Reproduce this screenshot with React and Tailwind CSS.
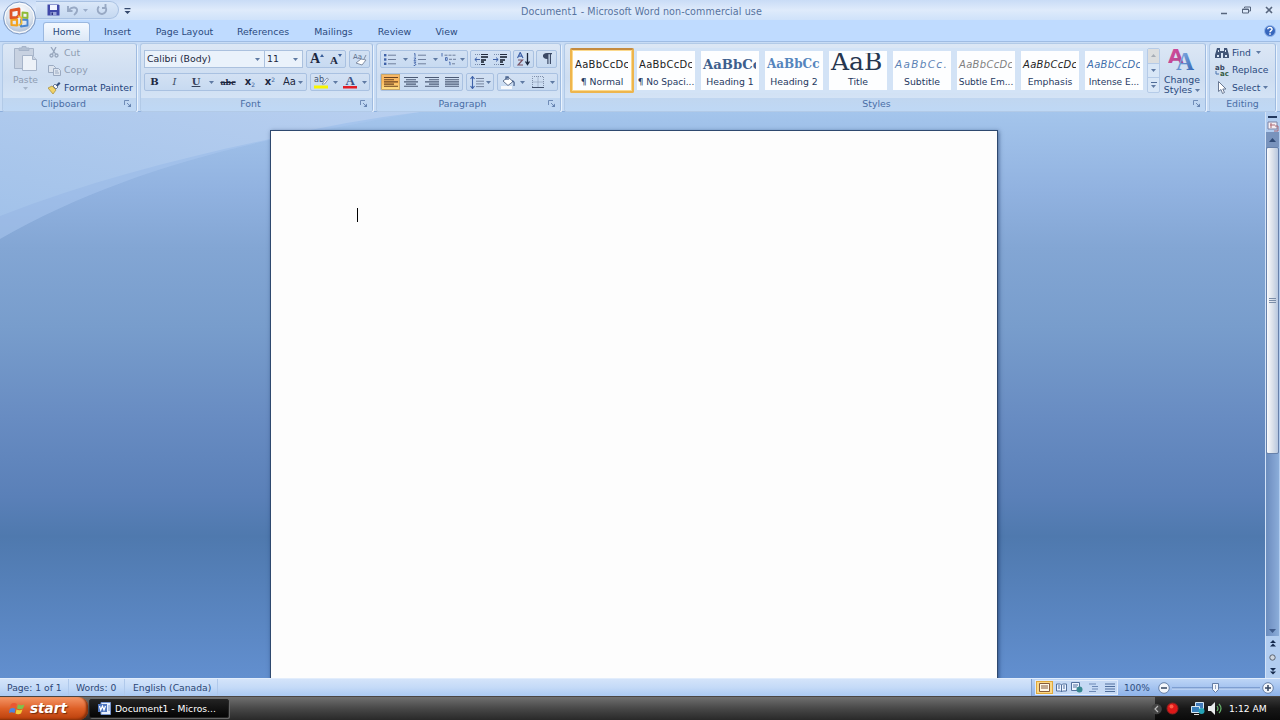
import React from "react";

const Caret = ({ c = "#5f7aa3" }) => (
  <svg width="5" height="3" viewBox="0 0 5 3" className="shrink-0"><path d="M0 0h5L2.5 3z" fill={c} /></svg>
);

const Tool = ({ w, children, active }) => (
  <div className={`${w} h-full flex items-center justify-center ${active ? "bg-linear-to-b from-[#f8b86a] via-[#fdb95a] to-[#ffe58c] ring-1 ring-inset ring-[#c9a76a]" : ""}`}>{children}</div>
);

const Strip = ({ w, children }) => (
  <div className={`${w} h-[18px] shrink-0 flex items-center rounded-[2px] border border-[#a9c1e1] bg-linear-to-b from-[#d3e1f3] to-[#c7daf1] overflow-hidden`}>{children}</div>
);

const Launcher = () => (
  <svg width="8" height="8" viewBox="0 0 8 8" fill="none" stroke="#6683b0"><path d="M.5 5V.5H5M3 3l3 3" strokeWidth=".9" /><path d="M7 3.5V7H3.5z" fill="#6683b0" stroke="none" /></svg>
);

const Group = ({ w, label, launcher = true, children }) => (
  <section className={`${w} h-[69px] shrink-0 flex flex-col rounded-[3px] border border-[#b2cae7] border-r-[#9fbbe0] bg-linear-to-b from-[#dce7f5] via-[#cdddf1] to-[#d8e7f8] shadow-[1px_1px_0_#eaf3fd] overflow-hidden`}>
    <div className="h-[54px] shrink-0">{children}</div>
    <div className="flex-1 flex items-center pb-px bg-linear-to-b from-[#c0d6f0] to-[#bfd8f5] text-[#4a6ea6]">
      <span className="flex-1 text-center leading-[12px]">{label}</span>
      {launcher && <span className="w-[12px]"><Launcher /></span>}
    </div>
  </section>
);

const Lines = ({ a, c = "#4b5a75" }) => (
  <svg width="14" height="12" viewBox="0 0 14 12" stroke={c} strokeWidth="1.1">
    {[14, a === "full" ? 14 : 10, 14, a === "full" ? 14 : 10, 14].map((w, i) => {
      const s = a === "center" ? (14 - w) / 2 : a === "right" ? 14 - w : 0;
      return <path key={i} d={`M${s} ${1.5 + i * 2.2}h${w}`} />;
    })}
  </svg>
);

const ListIcon = ({ kind }) => (
  <svg width="16" height="13" viewBox="0 0 16 13" fill="none" stroke="#6f7f9c">
    {kind === "bullet" && <><g fill="#3f62a8" stroke="none"><rect x="1" y="1" width="2.4" height="2.4" /><rect x="1" y="5.3" width="2.4" height="2.4" /><rect x="1" y="9.6" width="2.4" height="2.4" /></g><path d="M5 2.2h8M5 6.5h8M5 10.8h8" /></>}
    {kind === "number" && <><path stroke="#3f62a8" strokeWidth=".9" d="M1 1l1-.5V3.8M.8 5h2L1 7.8h2.2M.8 9.2h2L1.7 10.700l1.3.8-1 1H.7" /><path d="M5 2.2h8M5 6.5h8M5 10.8h8" /></>}
    {kind === "multi" && <><path stroke="#3f62a8" strokeWidth=".9" d="M1 0v3.5M4.5 4.6h1.7v2.8H4.5zM8 9.2h1v3" /><path d="M3.5 2.2h11M8 6.3h7.500M11 10.8h4" strokeDasharray="3 1" /></>}
  </svg>
);

const Indent = ({ flip }) => (
  <svg width="15" height="13" viewBox="0 0 15 13" fill="none">
    <path d="M1 1.5h5M1 11.5h5" stroke="#7a8cab" strokeDasharray="1 1" />
    <path d="M7 1.5h7M7 11.5h4" stroke="#222b3d" /><path d="M7 4h7M7 7h5M7 9h3" stroke="#111827" strokeWidth="1.7" />
    <path d={flip ? "M0 6.5h5M3 4.5l2.2 2L3 8.5" : "M6 6.5H1M3 4.5L.8 6.5 3 8.5"} stroke="#3f62a8" />
  </svg>
);

const styles = [
  ["¶ Normal", "AaBbCcDc", "font-['DejaVu_Sans'] text-[10px] tracking-[.3px] text-[#222]"],
  ["¶ No Spaci...", "AaBbCcDc", "font-['DejaVu_Sans'] text-[10px] tracking-[.3px] text-[#222]"],
  ["Heading 1", "AaBbCc", "font-['DejaVu_Serif'] font-bold text-[13.2px] text-[#3d5f8d]"],
  ["Heading 2", "AaBbCc", "font-['DejaVu_Serif'] font-bold text-[12px] text-[#5585bd]"],
  ["Title", "AaB", "font-['DejaVu_Serif'] text-[25px] text-[#26364f]"],
  ["Subtitle", "AaBbCc.", "font-['DejaVu_Sans'] italic text-[10.5px] tracking-[1.3px] text-[#5c82b5]"],
  ["Subtle Em...", "AaBbCcDc", "font-['DejaVu_Sans'] italic text-[10px] tracking-[.3px] text-[#808080]"],
  ["Emphasis", "AaBbCcDc", "font-['DejaVu_Sans'] italic text-[10px] tracking-[.3px] text-[#222]"],
  ["Intense E...", "AaBbCcDc", "font-['DejaVu_Sans'] italic text-[10px] tracking-[.3px] text-[#3f6fac]"],
];

function OfficeButton() {
  return (
    <svg className="absolute left-[2px] top-[1px] z-10" width="35" height="34" viewBox="0 0 35 34">
      <defs><radialGradient id="orb" cx=".5" cy=".3" r=".75"><stop offset="0" stopColor="#fff" /><stop offset=".55" stopColor="#dce4ee" /><stop offset=".8" stopColor="#b6c6dc" /><stop offset="1" stopColor="#fff" /></radialGradient></defs>
      <circle cx="17.5" cy="17" r="16" fill="url(#orb)" stroke="#7f9bc5" />
      <circle cx="17.5" cy="17" r="14.6" fill="none" stroke="#fff" strokeWidth="1" />
      <g fill="none" strokeLinejoin="round">
        <path d="M9 9.500l8-1.500v6.500l-2.500 2-5.500.5z" stroke="#df5424" strokeWidth="2.8" />
        <path d="M20.500 11.500l5 .5v5l-5-.5z" stroke="#8fbb36" strokeWidth="1.900" />
        <path d="M9.500 19l5.500-.5v6l-5.500-.5z" stroke="#f3a21c" strokeWidth="2.200" />
        <path d="M19 18.500l6.500.5v5.500l-6.500 1z" stroke="#4a86d0" strokeWidth="1.900" />
        <path d="M16 15l3.500 1.500v6l-3 2" stroke="#f0bb38" strokeWidth="1.800" />
      </g>
    </svg>
  );
}

function TitleBar() {
  return (
    <div className="h-5 flex items-center bg-linear-to-b from-[#c9dcf6] via-[#dfebfb] to-[#cfe2fa]">
      <div className="ml-9 w-[83px] h-[18px] pl-[11px] flex items-center rounded-r-full border border-[#a9c1e2] border-l-0 bg-linear-to-b from-[#dbe8f9] to-[#c5d8f0]">
        <svg width="13" height="12" viewBox="0 0 13 12"><path d="M.5.5h11l1 1v10H.5z" fill="#4048a8" /><path d="M3 1h7v5H3z" fill="#f1f4ff" /><path d="M3.500 8h6v3.500h-6z" fill="#9da6da" /><path d="M4.500 8.500h1.500v2.500H4.500z" fill="#293180" /></svg>
        <svg className="ml-[7px]" width="12" height="11" viewBox="0 0 12 11" fill="none" stroke="#98a9c4" strokeWidth="1.900"><path d="M2 5c3-4 9-3 8 1-.4 2-2 3-3 4M1 1v5h4.500" /></svg>
        <span className="ml-[4px]"><Caret c="#9badca" /></span>
        <svg className="ml-[8px]" width="12" height="12" viewBox="0 0 12 12" fill="none" stroke="#98a9c4" strokeWidth="1.900"><path d="M3 2.500a4.300 4.300 0 1 0 5.500-.3M9.500 0v4H6" /></svg>
      </div>
      <svg className="ml-[5px] mt-px" width="7" height="6" viewBox="0 0 7 6"><path d="M.5 0h6v1.200h-6zM.5 3h6l-3 3z" fill="#35496e" /></svg>
      <div className="ml-[390px] w-[245px] mt-[3px] whitespace-nowrap text-[9.600px] tracking-[.08px] text-[#56739f]">Document1 - Microsoft Word non-commercial use</div>
      <div className="flex-1" />
      <div className="flex items-center gap-[14px] pr-[7px] text-[#56657d]">
        <svg width="8" height="9" viewBox="0 0 8 9"><path d="M1 7.500h6" stroke="currentColor" strokeWidth="1.500" /></svg>
        <svg width="9" height="8" viewBox="0 0 9 8" fill="none" stroke="currentColor"><path d="M2.500 2V1h6v4H7M.5 3h6v4h-6zM.5 3.500h6" /></svg>
        <svg width="8" height="8" viewBox="0 0 8 8" stroke="currentColor" strokeWidth="1.600"><path d="M1 1l6 6M7 1L1 7" /></svg>
      </div>
    </div>
  );
}

function Tabs() {
  return (
    <nav className="h-[21px] flex items-end bg-[#bfdbff] text-[#2b4a7e] text-[9.400px]">
      <div className="ml-[43px] w-[47px] h-[19px] flex items-center justify-center rounded-t-[3px] border border-b-0 border-[#9ab8e0] bg-linear-to-b from-[#f4f9ff] to-[#dce8f6]">Home</div>
      {[["Insert", "w-[55px]"], ["Page Layout", "w-[79px]"], ["References", "w-[78px]"], ["Mailings", "w-[63px]"], ["Review", "w-[59px]"], ["View", "w-[45px]"]].map(([t, w]) => (
        <div key={t} className={`${w} h-[19px] pt-px flex items-center justify-center whitespace-nowrap`}>{t}</div>
      ))}
      <div className="flex-1" />
      <svg className="mr-[4px] mb-[4px]" width="12" height="12" viewBox="0 0 12 12"><circle cx="6" cy="6" r="5.500" fill="#3666bd" stroke="#94b7ec" /><path d="M3.800 4.200C4 1.500 8.300 2 8 4.500 7.800 5.700 6 5.500 6 7.300M6 8.200v1.500" fill="none" stroke="#fff" strokeWidth="1.500" /></svg>
    </nav>
  );
}

function Clipboard() {
  return (
    <Group w="w-[135px]" label="Clipboard">
      <div className="flex h-full text-[#8f9db2]">
        <div className="w-[45px] pt-[2px] flex flex-col items-center">
          <svg width="25" height="25" viewBox="0 0 25 25" fill="#c8d2e1" stroke="#a6b4c9"><path d="M1.500 2.500h19v20h-19z" /><path d="M6 4.500V2h3V.5h4V2h3v2.500z" fill="#b3c0d2" /><path d="M9.500 9.500h10l4 4v11h-14z" fill="#edf2f8" /><path d="M19.500 9.500v4h4" /></svg>
          <span className="mt-[3px] leading-[12px] text-[9.200px]">Paste</span><span className="mt-px"><Caret c="#a6b5ca" /></span>
        </div>
        <div className="flex-1 flex flex-col whitespace-nowrap text-[9.400px]">
          <div className="h-[17px] flex items-center"><span className="w-[16px] pl-px"><svg width="10" height="11" viewBox="0 0 10 11" fill="none" stroke="#97a6bc" strokeWidth="1.300"><path d="M2 0l4.500 7M7 0L3.500 7" /><circle cx="2.500" cy="8.500" r="1.500" /><circle cx="7.500" cy="8.500" r="1.500" /></svg></span>Cut</div>
          <div className="h-[18px] flex items-center"><span className="w-[16px]"><svg width="13" height="11" viewBox="0 0 13 11" fill="#dce4ef" stroke="#9baac1"><path d="M.5.5h5l2 2v5h-7z" /><path d="M5.500 3.500h5l2 2v5h-7zM7 6h3M7 8h4" /></svg></span>Copy</div>
          <div className="h-[17px] flex items-center text-[#24447e]"><span className="w-[16px]"><svg width="13" height="12" viewBox="0 0 13 12"><path d="M0 6l4-2 4 4-3 4z" fill="#f0d269" stroke="#a58a37" strokeWidth=".7" /><path d="M5 4l2-2 3 3-2 2z" fill="#f7f8fb" stroke="#71819d" /><path d="M8 3l3-3 1.500 1.500-3 3z" fill="#35507f" /></svg></span>Format Painter</div>
        </div>
      </div>
    </Group>
  );
}

function FontGroup() {
  return (
    <Group w="w-[233px]" label="Font">
      <div className="pt-[6px] pl-[3px] flex flex-col gap-[5px] text-[#1c2740]">
        <div className="flex">
          <div className="w-[121px] h-[18px] border border-[#abc1de] bg-[#eaf2fb] flex items-center justify-between pl-[2px] pr-[4px] text-[9.400px]">Calibri (Body)<Caret /></div>
          <div className="w-[38px] h-[18px] border border-l-0 border-[#abc1de] bg-[#eaf2fb] flex items-center justify-between pl-[2px] pr-[4px] text-[9.400px]">11<Caret /></div>
          <div className="w-[3px]" />
          <Strip w="w-[40px]">
            <Tool w="w-[20px]"><span className="font-['Liberation_Serif'] font-bold text-[14px] leading-[18px]">A</span><span className="mb-[8px]"><svg className="block" width="4" height="3"><path d="M0 3l2-3 2 3z" fill="#3b5f9a" /></svg></span></Tool>
            <Tool w="w-[18px]"><span className="font-['Liberation_Serif'] font-bold text-[11px] leading-none mt-[2px]">A</span><span className="mb-[8px]"><svg className="block" width="4" height="3"><path d="M0 0h4L2 3z" fill="#3b5f9a" /></svg></span></Tool>
          </Strip>
          <div className="w-[3px]" />
          <Strip w="w-[21px]"><Tool w="w-[19px]"><svg width="16" height="14" viewBox="0 0 16 14"><text x="1" y="7" fontSize="7" fontFamily="DejaVu Sans" fill="#596b88">Aa</text><path d="M4 11l5-4 5 1-4 5z" fill="#fff" stroke="#8390a6" /><path d="M12 7l2-4" stroke="#8390a6" /></svg></Tool></Strip>
        </div>
        <div className="flex gap-[3px]">
          <Strip w="w-[163px]">
            <Tool w="w-[19px]"><b className="font-['DejaVu_Serif'] text-[10px]">B</b></Tool>
            <Tool w="w-[21px]"><i className="font-['DejaVu_Serif'] text-[10px] text-[#414e67]">I</i></Tool>
            <Tool w="w-[22px]"><u className="font-['DejaVu_Serif'] text-[10px] font-bold text-[#35415a]">U</u></Tool>
            <Tool w="w-[9px]"><Caret /></Tool>
            <Tool w="w-[24px]"><s className="font-['DejaVu_Serif'] font-bold text-[8.100px] tracking-[-.2px]">abc</s></Tool>
            <Tool w="w-[20px]"><b className="text-[10px]">x</b><span className="text-[6px] mt-[5px] text-[#3b5f9a]">2</span></Tool>
            <Tool w="w-[20px]"><b className="text-[10px]">x</b><span className="text-[6px] mb-[5px] text-[#3b5f9a]">2</span></Tool>
            <Tool w="w-[26px]"><span className="font-['DejaVu_Sans'] text-[10px] mr-[2px]">Aa</span><Caret /></Tool>
          </Strip>
          <Strip w="w-[60px]">
            <Tool w="w-[20px]"><svg width="15" height="14" viewBox="0 0 15 14"><text x="0" y="7" fontSize="8" fontFamily="DejaVu Sans" fill="#40506e">ab</text><path d="M8 9l5-6 1.500 1-4 5z" fill="#fff" stroke="#71809b" strokeWidth=".8" /><path d="M0 10.500h14v3H0z" fill="#f8f500" /></svg></Tool>
            <Tool w="w-[9px]"><Caret /></Tool>
            <Tool w="w-[20px]"><svg width="14" height="14" viewBox="0 0 14 14"><text x="2.500" y="10" fontSize="13" fontWeight="bold" fontFamily="Liberation Serif" fill="#3d5486">A</text><path d="M0 11h14v2.500H0z" fill="#e31d25" /></svg></Tool>
            <Tool w="w-[9px]"><Caret /></Tool>
          </Strip>
        </div>
      </div>
    </Group>
  );
}

function Paragraph() {
  return (
    <Group w="w-[185px]" label="Paragraph">
      <div className="pt-[6px] pl-[3px] flex flex-col gap-[5px]">
        <div className="flex gap-[2px]">
          <Strip w="w-[88px]">
            <Tool w="w-[20px]"><ListIcon kind="bullet" /></Tool><Tool w="w-[9px]"><Caret /></Tool>
            <Tool w="w-[21px]"><ListIcon kind="number" /></Tool><Tool w="w-[9px]"><Caret /></Tool>
            <Tool w="w-[18px]"><ListIcon kind="multi" /></Tool><Tool w="w-[8px]"><Caret /></Tool>
          </Strip>
          <Strip w="w-[41px]"><Tool w="w-[20px]"><Indent /></Tool><Tool w="w-[19px]"><Indent flip /></Tool></Strip>
          <Strip w="w-[21px]"><Tool w="w-[19px]"><svg width="14" height="14" viewBox="0 0 14 14" fill="none"><path d="M.5 6L3.200.5 6 6M1.500 4.200h3.500" stroke="#3f62a8" strokeWidth="1.200" /><path d="M1 8h4.500L1 13h5" stroke="#7b5263" strokeWidth="1.200" /><path d="M10.500 1v11M8.500 9.500l2 3 2-3" stroke="#18243a" strokeWidth="1.300" /></svg></Tool></Strip>
          <Strip w="w-[21px]"><Tool w="w-[19px]"><svg width="10" height="12" viewBox="0 0 10 12"><path d="M5 0h5v1.200H9V11H7.800V1.200H6.500V11H5.300V6C-.5 6-.5 0 5 0z" fill="#3c4a66" /></svg></Tool></Strip>
        </div>
        <div className="flex gap-[3px]">
          <Strip w="w-[83px]">
            <Tool w="w-[19px]" active><Lines a="left" c="#6b4320" /></Tool><Tool w="w-[21px]"><Lines a="center" /></Tool><Tool w="w-[21px]"><Lines a="right" /></Tool><Tool w="w-[20px]"><Lines a="full" /></Tool>
          </Strip>
          <Strip w="w-[28px]"><Tool w="w-[26px]"><svg className="mr-[2px]" width="14" height="13" viewBox="0 0 14 13" fill="none"><path d="M2.500 1v11M.5 3l2-2.500 2 2.500M.5 10l2 2.500 2-2.500" stroke="#3f62a8" strokeWidth="1.100" /><path d="M6 2.500h8M6 5.200h8M6 7.900h8M6 10.600h8" stroke="#76849e" /></svg><Caret /></Tool></Strip>
          <Strip w="w-[61px]">
            <Tool w="w-[20px]"><svg width="15" height="13" viewBox="0 0 15 13"><path d="M2 5l5-4 5 4.500-5 4z" fill="#fff" stroke="#65748e" /><path d="M5 4V1h2v3M11 5c3 0 2 3 2 5" fill="none" stroke="#49638f" strokeWidth="1.300" /><path d="M0 10h11v3H0z" fill="#f6f8fb" /></svg></Tool>
            <Tool w="w-[9px]"><Caret /></Tool>
            <Tool w="w-[21px]"><svg width="12" height="12" viewBox="0 0 12 12" fill="none" stroke="#8090aa"><path d="M.5 11V.5h11V11M6 .5V11M.5 6h11" strokeDasharray="1 1" /><path d="M0 11.500h12" stroke="#3f4d68" /></svg></Tool>
            <Tool w="w-[9px]"><Caret /></Tool>
          </Strip>
        </div>
      </div>
    </Group>
  );
}

function StylesGroup() {
  return (
    <Group w="w-[642px]" label={<span className="mr-[5px]">Styles</span>}>
      <div className="flex pl-[5px] pt-[4px]">
        <div className="w-[577px] h-[45px] flex bg-[#d3e3f6]">
          {styles.map(([name, sample, cls], i) => (
            <div key={name} className={`w-[64px] h-[45px] shrink-0 ${i === 0 ? "rounded-[2px] border-2 border-[#eeb54d] border-t-[#c58b3f] bg-white ring-1 ring-inset ring-[#fbd98d] py-px px-px" : "py-[3px] px-[3px]"}`}>
              <div className="h-[39px] bg-[#fdfeff] flex flex-col overflow-hidden">
                <div className={`${name === "Title" ? "mt-[2px] h-[23px] leading-[18px]" : "h-[25px] leading-[27px]"} pl-[2px] mr-[3px] overflow-hidden whitespace-nowrap ${cls}`}>{sample}</div>
                <div className={`text-center whitespace-nowrap leading-[12px] text-[#26395f] ${name.length > 10 ? "text-[9px]" : "text-[9.300px]"}`}>{name}</div>
              </div>
            </div>
          ))}
        </div>
        <div className="w-[13px] h-[45px] flex flex-col border border-[#b5cbe8] rounded-[2px] bg-[#d9e7f7]">
          <div className="flex-1 flex items-center justify-center bg-[#dcdedf]"><svg width="5" height="3"><path d="M0 3l2.500-3L5 3z" fill="#a7adb6" /></svg></div>
          <div className="flex-1 flex items-center justify-center border-y border-[#b5cbe8]"><Caret /></div>
          <div className="flex-1 flex flex-col gap-[2px] items-center justify-center"><span className="w-[6px] h-px bg-[#4f6b96]" /><Caret /></div>
        </div>
        <div className="ml-[2px] w-[40px] -mt-[2px] flex flex-col items-center text-[#2b4a7e] leading-[10px] whitespace-nowrap">
          <svg width="28" height="25" viewBox="0 0 28 25"><defs><linearGradient id="pinkA" x2="1" y2="1"><stop stopColor="#e34b9e" /><stop offset="1" stopColor="#a3458c" /></linearGradient><linearGradient id="blueA" x2="1" y2="1"><stop stopColor="#9cc1ef" /><stop offset="1" stopColor="#2b5eae" /></linearGradient></defs><text x="0" y="17" fontSize="20" fontWeight="bold" fontFamily="DejaVu Sans" fill="url(#pinkA)">A</text><text x="8" y="24" fontSize="25" fontWeight="bold" fontFamily="Liberation Serif" fill="url(#blueA)">A</text></svg>
          <span className="mt-[4px]">Change</span><span className="flex items-center gap-[3px]">Styles <Caret /></span>
        </div>
      </div>
    </Group>
  );
}

function Editing() {
  return (
    <Group w="w-[67px]" label="Editing" launcher={false}>
      <div className="pl-[5px] text-[#2b4a7e] text-[9.200px]">
        <div className="h-[17px] flex items-center"><span className="w-[17px]"><svg width="14" height="12" viewBox="0 0 14 12"><path d="M2 1h3v3h4V1h3l2 7v3H8V6H6v5H0V8z" fill="#415577" /><path d="M2 8h2v2H2zM10 8h2v2h-2zM3 3h1v2H3zM10 3h1v2h-1z" fill="#dce7f6" /></svg></span>Find<span className="ml-[5px]"><Caret /></span></div>
        <div className="h-[18px] flex items-center"><span className="w-[17px]"><svg width="15" height="13" viewBox="0 0 15 13"><text x="0" y="6" fontSize="7" fontWeight="bold" fontFamily="DejaVu Sans" fill="#39465e">ab</text><text x="5" y="12" fontSize="7" fontWeight="bold" fontFamily="DejaVu Sans" fill="#365b43">ac</text><path d="M1 7v3h3" fill="none" stroke="#4873ae" /></svg></span>Replace</div>
        <div className="h-[17px] flex items-center"><span className="w-[17px] pl-[3px]"><svg width="9" height="13" viewBox="0 0 9 13"><path d="M.5.5v10l2.500-2 1.500 4 2-1-1.700-3.500H8z" fill="#fff" stroke="#697892" /></svg></span>Select<span className="ml-[3px]"><Caret /></span></div>
      </div>
    </Group>
  );
}

function ScrollBar() {
  return (
    <div className="w-[15px] h-full flex flex-col items-center bg-[#b2cdf0] border-l border-[#d3e3f8] pr-px">
      <div className="mt-[4px] w-[9px] h-[2px] bg-[#23395f]" />
      <svg className="mt-[2px]" width="12" height="12" viewBox="0 0 12 12"><path d="M1 2h9v7H1z" fill="#f7eff3" stroke="#7c83a5" /><path d="M3 5h5M4 3v5M8 6h3v5H7" stroke="#aa6b76" fill="none" /></svg>
      <div className="w-[13px] h-[504px] flex flex-col bg-linear-to-r from-[#6a8cbd] via-[#7c9ccc] to-[#8badd9]">
        <div className="h-[15px] flex items-center justify-center bg-[#7893bd]"><svg width="7" height="4"><path d="M0 4l3.500-4L7 4z" fill="#304b77" /></svg></div>
        <div className="h-[307px] border border-[#6781aa] rounded-[2px] bg-linear-to-r from-[#fafbfd] via-[#dbe1ea] to-[#b7c7df] flex flex-col justify-center items-center gap-px">
          <span className="w-[7px] h-px bg-[#7b8da8]" /><span className="w-[7px] h-px bg-[#7b8da8]" /><span className="w-[7px] h-px bg-[#7b8da8]" />
        </div>
        <div className="flex-1" />
        <div className="h-[11px] flex items-center justify-center"><svg width="7" height="4"><path d="M0 0h7L3.500 4z" fill="#405c8b" /></svg></div>
      </div>
      <div className="flex-1 flex flex-col items-center justify-around">
        <svg width="6" height="7"><path d="M0 3l3-3 3 3zM0 6.500l3-3 3 3z" fill="#152a4e" /></svg>
        <svg width="7" height="7"><circle cx="3.500" cy="3.500" r="2.700" fill="#cfd6df" stroke="#5b6472" /></svg>
        <svg width="6" height="7"><path d="M0 0h6L3 3zM0 3.500h6l-3 3z" fill="#152a4e" /></svg>
      </div>
    </div>
  );
}

function Workspace() {
  return (
    <main className="relative h-[566px] flex overflow-hidden bg-[linear-gradient(to_bottom,#a4c5ec_0%,#91b2e0_14%,#83a6d4_24%,#789dcc_38%,#688cc2_54%,#5a80b8_68%,#4f79ae_75%,#5b87c3_91%,#628fcf_100%)]">
      <svg className="absolute left-0 top-0" width="420" height="128" viewBox="0 112 420 128">
        <defs><linearGradient id="swoosh" x1="0" y1="1" x2="1" y2="0"><stop stopColor="#a3c3ea" /><stop offset="1" stopColor="#bad0f0" /></linearGradient></defs>
        <path d="M0 112V239C80 193 170 162 270 140L420 112z" fill="#a9c7ee" opacity=".55" />
        <path d="M0 112V216C90 181 180 158 270 139Q345 121 420 112z" fill="url(#swoosh)" opacity=".9" />
      </svg>
      <div className="relative flex-1 pl-[270px] pt-[18px]">
        <div className="w-[728px] h-[560px] bg-[#fdfdfd] border border-[#2f496f] shadow-[1px_1px_4px_rgba(20,45,90,.6)] pl-[86px] pt-[77px]">
          <div className="w-px h-[14px] bg-black" />
        </div>
      </div>
      <div className="relative"><ScrollBar /></div>
    </main>
  );
}

function StatusBar() {
  return (
    <footer className="h-[18px] flex items-center border-t border-[#e2edfc] bg-linear-to-b from-[#d4e4fa] via-[#c4daf7] to-[#abcaf3] text-[#2b4674] whitespace-nowrap text-[9.200px]">
      <div className="w-[69px] pl-[7px] h-full flex items-center border-r border-[#b0c9eb]">Page: 1 of 1</div>
      <div className="w-[56px] pl-[7px] h-full flex items-center border-r border-[#b0c9eb]">Words: 0</div>
      <div className="w-[93px] pl-[8px] h-full flex items-center border-r border-[#b0c9eb]">English (Canada)</div>
      <div className="flex-1" />
      <div className="w-[249px] h-full flex items-center bg-linear-to-b from-[#bdd5f6] to-[#8db2e9] border-l border-[#829fcb]">
        <div className="ml-[3px] w-[83px] h-[15px] flex items-center bg-[#c5d9f4] border border-[#e0ebfb]">
          <span className="w-[17px] h-full flex items-center justify-center bg-[#fad887] border border-[#e1a93b]"><svg width="11" height="9" fill="#fff8e7" stroke="#855a3a"><path d="M.5.5h10v8H.5zM2 3h7M2 5h7" /></svg></span>
          <svg className="ml-[3px]" width="11" height="10" fill="#edf4ff" stroke="#53719e"><path d="M.5 1h4l1 1 1-1h4v7h-4l-1 1-1-1h-4zM5.500 2v7M2 3h2M2 5h2M7 3h2M7 5h2" /></svg>
          <svg className="ml-[4px]" width="12" height="11"><path d="M.5.5h8v8h-8z" fill="#edf4ff" stroke="#53719e" /><path d="M2 3h5M2 5h4" stroke="#53719e" /><circle cx="8.500" cy="7.500" r="3" fill="#388991" /></svg>
          <svg className="ml-[6px]" width="10" height="9" stroke="#6c89b6"><path d="M0 1h7M3 3.500h6M3 6h6M0 8.500h7" /></svg>
          <svg className="ml-[6px]" width="10" height="9" stroke="#506f9d"><path d="M0 1h10M0 3.500h10M0 6h10M0 8.500h10" /></svg>
        </div>
        <span className="ml-[6px] w-[33px] text-[#2e4e80] text-[9px]">100%</span>
        <svg className="ml-px" width="12" height="14"><circle cx="6" cy="7" r="5.300" fill="#f3f6fb" stroke="#6781a9" /><path d="M3 7h6" stroke="#34445f" strokeWidth="1.500" /></svg>
        <svg width="92" height="14"><path d="M2 7h88" stroke="#5479b3" /><path d="M2 8h88" stroke="#cfe0f8" /><path d="M42.500 2.500h6v6l-3 3-3-3z" fill="#f3f6fb" stroke="#627ca5" /><path d="M45.500 4v4" stroke="#9aabc5" /></svg>
        <svg width="13" height="14"><circle cx="6" cy="7" r="5.300" fill="#f3f6fb" stroke="#6781a9" /><path d="M3 7h6M6 4v6" stroke="#34445f" strokeWidth="1.500" /></svg>
      </div>
    </footer>
  );
}

function Taskbar() {
  return (
    <div className="h-6 flex items-center bg-linear-to-b from-[#707070] via-[#484848] to-[#292929] text-white border-t border-[#4a4542] whitespace-nowrap">
      <div className="w-[88px] h-full pl-[9px] flex items-center gap-[5px] rounded-r-[9px] bg-linear-to-b from-[#f49665] via-[#de6026] to-[#b93e08] shadow-[inset_-2px_-1px_2px_#85310c]">
        <svg width="16" height="13" viewBox="0 0 16 13"><path d="M2 2q3-2 6 0L6.800 6q-3-2-6 0z" fill="#e95732" /><path d="M9 2.500q3 1.500 6.500 0l-1.500 4q-3 1.500-6 0z" fill="#7cc34c" /><path d="M.8 7q3-2 5.700 0l-1 4q-3-1.700-5.500 0z" fill="#4d84df" /><path d="M7.500 7.500q3 1.500 6 0l-1.500 4q-3 1.500-5.500 0z" fill="#f3ce37" /></svg>
        <span className="font-['DejaVu_Sans'] italic font-bold text-[13.600px] leading-none [text-shadow:1px_1px_1px_#712b0c]">start</span>
      </div>
      <div className="ml-px w-[140px] h-[19px] pl-[8px] flex items-center gap-[4px] rounded-[2px] border border-[#242424] bg-linear-to-b from-[#222] to-[#050505] text-[9.200px] shadow-[1px_1px_0_#666]">
        <svg width="13" height="13" viewBox="0 0 13 13"><path d="M3 .5h9.500v12H3z" fill="#e7effc" stroke="#7694ce" /><path d="M0 2h9v8H0z" fill="#4d74be" /><path d="M1.500 4l1.200 4 1.800-4 1.500 4 1.500-4" fill="none" stroke="#fff" strokeWidth="1.200" /><path d="M10 4h2M10 6h2M10 8h2" stroke="#7694ce" /></svg>
        Document1 - Micros...
      </div>
      <div className="flex-1" />
      <div className="w-[125px] h-full flex items-center bg-linear-to-b from-[#383838] via-[#171717] to-[#0a0a0a]">
        <svg className="-ml-[4px]" width="11" height="12"><circle cx="5.500" cy="6" r="5.300" fill="#444" /><path d="M7 3L4 6l3 3" fill="none" stroke="#bbb" strokeWidth="1.200" /></svg>
        <svg className="ml-[4px]" width="13" height="13"><circle cx="6.500" cy="6.500" r="5.500" fill="#de1818" stroke="#822" /><circle cx="5.500" cy="4.500" r="2" fill="#ff5c48" /></svg>
        <svg className="ml-[12px]" width="14" height="13"><path d="M4.500.5h8v6h-8z" fill="#427bb9" stroke="#d5e7f5" /><path d="M.5 4.500h8v6h-8z" fill="#397fbb" stroke="#d5e7f5" /><circle cx="10.500" cy="9" r="3" fill="#26a3b6" /><path d="M3 12.500h5" stroke="#ddd" /></svg>
        <svg className="ml-[3px]" width="14" height="13" fill="none"><path d="M0 4h3l4-4v13L3 9H0z" fill="#e9eced" /><path d="M9 4q2 2.500 0 5M11 2q4 4.500 0 9" stroke="#67b36b" strokeWidth="1.200" /></svg>
        <span className="ml-[7px] text-[9.200px]">1:12 AM</span>
      </div>
    </div>
  );
}

export default function App() {
  return (
    <div className="relative w-[1280px] h-[720px] overflow-hidden flex flex-col font-['DejaVu_Sans',sans-serif] text-[9.400px] leading-[12px] bg-[#bfdbff]">
      <OfficeButton />
      <TitleBar />
      <Tabs />
      <div className="h-[71px] shrink-0 flex gap-[3px] pl-[2px] pt-px border-t border-[#9fbce3] bg-[#c8dcf5] border-b border-b-[#8eb0dc]">
        <Clipboard /><FontGroup /><Paragraph /><StylesGroup /><Editing />
      </div>
      <Workspace />
      <StatusBar />
      <Taskbar />
    </div>
  );
}
